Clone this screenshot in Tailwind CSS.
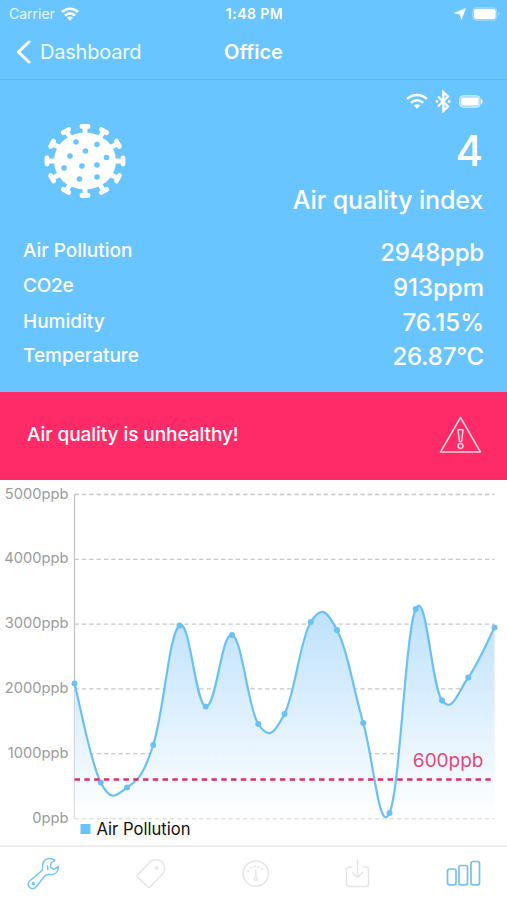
<!DOCTYPE html>
<html lang="en">
<head>
  <meta charset="UTF-8" />
  <meta name="viewport" content="width=device-width, initial-scale=1" />
  <title>Office - Air quality</title>
  <script src="https://cdn.jsdelivr.net/npm/@tailwindcss/browser@4"></script>
</head>
<body class="bg-white">
  <div class="flex flex-col w-[507px] h-[900px] overflow-hidden font-['Inter','Liberation_Sans',sans-serif]">

    <!-- Status bar -->
    <header class="bg-[#69c5ff] text-white border-b border-[#5db7ef] h-20 shrink-0">
      <div class="grid grid-cols-3 items-center h-[27px] pl-[9px] pr-[7px]">
        <div class="flex items-center gap-1.5 text-[14px] text-white/85">
          <span>Carrier</span>
          <svg class="w-[18px] h-[14px]" viewBox="0 0 18 14" fill="none" stroke="white" stroke-width="2.6">
            <path d="M1 5a11.3 11.3 0 0 1 16 0M4 8.6a7.1 7.1 0 0 1 10 0" />
            <path d="M9 13.8 6 10.8a4.2 4.2 0 0 1 6 0z" fill="white" stroke="none" />
          </svg>
        </div>
        <div class="text-center text-[14px] font-semibold tracking-[0.45px]">1:48 PM</div>
        <div class="flex items-center justify-end gap-1.5">
          <svg class="w-3 h-3" viewBox="0 0 12 12" fill="white" stroke="white" stroke-width=".6"><path d="M11.500.500 7.300 11.500 6.300 6.200.500 5z" /></svg>
          <svg class="w-[28px] h-[14px]" viewBox="0 0 28 14">
            <rect x=".6" y=".6" width="24.3" height="12.8" rx="3.6" fill="#8fd3ff" stroke="#94d6ff" />
            <rect x="2" y="2" width="21.5" height="10" rx="2.2" fill="white" />
            <path d="M26.3 5c1.6.6 1.6 3.4 0 4z" fill="#a3dbff" />
          </svg>
        </div>
      </div>
      <!-- Nav -->
      <div class="grid grid-cols-3 items-center h-[50px] px-4">
        <div class="flex items-center gap-[9px] text-[20px] tracking-[-0.2px] text-white/90">
          <svg class="w-[15px] h-6" viewBox="0 0 15 24" fill="none" stroke="white" stroke-width="3" stroke-linecap="round" stroke-linejoin="round"><path d="M13 2 2.3 12 13 22" /></svg>
          <span>Dashboard</span>
        </div>
        <div class="text-center text-[20px] font-semibold">Office</div>
      </div>
    </header>

    <!-- Current values -->
    <section class="bg-[#69c5ff] text-white h-[312px] shrink-0 px-6 pt-[9px]">
      <div class="flex justify-end items-center gap-2 h-6">
        <svg class="w-[22px] h-4 -mr-px" viewBox="0 0 22 16" fill="none" stroke="white" stroke-width="2.4">
          <path d="M1.2 6a13.9 13.9 0 0 1 19.6 0M5 9.8a8.5 8.5 0 0 1 12 0" />
          <path d="M11 15.8 7.8 12.6a4.5 4.5 0 0 1 6.4 0z" fill="white" stroke="none" />
        </svg>
        <svg class="w-4 h-[23px]" viewBox="0 0 16 23" fill="none" stroke="white" stroke-width="2.300">
          <path d="m3 6.500 10 10L8.300 21V2L13 6.500 3 16.500" />
          <circle cx="2" cy="11.500" r="1.400" fill="white" stroke="none" />
          <circle cx="14" cy="11.500" r="1.400" fill="white" stroke="none" />
        </svg>
        <svg class="w-6 h-[13px]" viewBox="0 0 24 13">
          <rect x=".7" y=".7" width="20.500" height="11.600" rx="3.500" fill="#a9dcff" stroke="#d2edff" />
          <rect x="2.500" y="2.800" width="17" height="7.400" rx="1" fill="white" />
          <path d="M22 4c2.300 1 2.300 4 0 5z" fill="white" />
        </svg>
      </div>
      <div class="flex justify-between">
        <svg class="w-[82px] h-20 ml-5 mt-[8px]" viewBox="0 0 82 80">
          <ellipse cx="41" cy="40" rx="31" ry="28.500" fill="white" />
          <g id="spikes" stroke="white" stroke-width="4.800" stroke-linecap="round" fill="none"></g>
          <g fill="#69c5ff">
            <circle cx="32" cy="21" r="2.800" /><circle cx="53" cy="23.500" r="2.800" />
            <circle cx="41.500" cy="30" r="2.800" /><circle cx="26" cy="35" r="2.800" />
            <circle cx="62.500" cy="36.500" r="2.800" /><circle cx="20" cy="47" r="2.800" />
            <circle cx="38" cy="45" r="2.800" /><circle cx="53" cy="44" r="2.800" />
            <circle cx="35.500" cy="58" r="2.800" /><circle cx="53" cy="56" r="2.800" />
          </g>
        </svg>
        <div class="text-right">
          <div class="text-[42px] leading-[50px] mt-[13px] font-medium">4</div>
          <div class="text-[25px] leading-8 mt-[8px] font-medium tracking-[-0.15px]">Air quality index</div>
        </div>
      </div>
      <dl class="mt-[19px] -ml-px -mr-px">
        <div class="flex justify-between h-[35px]">
          <dt class="text-[19px] leading-8 font-medium">Air Pollution</dt>
          <dd class="text-[24px] leading-9 font-medium tracking-[-0.2px]">2948ppb</dd>
        </div>
        <div class="flex justify-between h-[35px]">
          <dt class="text-[19px] leading-8 font-medium tracking-[-0.2px]">CO2e</dt>
          <dd class="text-[24px] leading-9 font-medium">913ppm</dd>
        </div>
        <div class="flex justify-between h-[35px]">
          <dt class="text-[19px] leading-[34px] font-medium">Humidity</dt>
          <dd class="text-[24px] leading-9 font-medium">76.15%</dd>
        </div>
        <div class="flex justify-between h-[35px]">
          <dt class="text-[19px] leading-8 font-medium">Temperature</dt>
          <dd class="text-[24px] leading-[34px] font-medium tracking-[-0.2px]">26.87°C</dd>
        </div>
      </dl>
    </section>

    <!-- Alert -->
    <section class="bg-[#ff2b69] text-white h-[88px] shrink-0 flex items-center justify-between pl-[27px] pr-[25px]">
      <p class="text-[19px] font-medium tracking-[-0.06px] -mt-0.5">Air quality is unhealthy!</p>
      <svg class="w-[43px] h-[38px] -mt-0.5" viewBox="0 0 43 38" fill="none" stroke="#ffd5e1" stroke-width="1.500" stroke-linejoin="round">
        <path d="M21.500 1.500 41.500 36H1.500z" />
        <path d="M19 14q2.500-1 5 0l-1.400 11.500h-2.200z" />
        <circle cx="21.500" cy="30" r="2.400" />
      </svg>
    </section>

    <!-- Chart -->
    <section class="h-[365px] shrink-0">
      <svg class="w-[507px] h-[365px]" viewBox="0 480 507 365">
        <defs>
          <linearGradient id="fill" gradientUnits="userSpaceOnUse" x1="0" y1="606" x2="0" y2="818">
            <stop offset="0" stop-color="#b7defd" />
            <stop offset="1" stop-color="#ffffff" />
          </linearGradient>
        </defs>
        <g id="grid" stroke="#c8c8c8" stroke-width="1.300" stroke-dasharray="4.400 2.930"></g>
        <path d="M74.500 494.500V818.500" stroke="#c4c4c4" stroke-width="1.300" />
        <path id="area" fill="url(#fill)" fill-opacity="0.920" />
        <path id="line" fill="none" stroke="#69c1f8" stroke-width="2.200" />
        <g id="dots" fill="#69c1f8"></g>
        <path d="M74.500 779.500H494" stroke="#df2f69" stroke-width="2.600" stroke-dasharray="5.500 4.280" />
        <text x="483.500" y="766.500" text-anchor="end" class="text-[19px]" fill="#e0487a">600ppb</text>
        <g id="labels" class="text-[14.7px]" fill="#9b9ca0" text-anchor="end"></g>
        <rect x="80.500" y="824" width="10" height="10" fill="#69c5ff" />
        <text x="96.500" y="835" class="text-[16.6px]" fill="#111">Air Pollution</text>
      </svg>
    </section>

    <!-- Tab bar -->
    <nav class="grow border-t-2 border-[#eeeeef] flex">
      <svg class="w-[507px] h-[53px]" viewBox="0 847 507 53" fill="none" stroke="#e6e6e7" stroke-width="1.500" stroke-linecap="round" stroke-linejoin="round">
        <g stroke="#74c6fa">
          <path d="M54.800 860.300C51 857.500 46 858 43.800 861.500c-1.300 2-1.500 4.500-1.200 7 0 1-.6 1.800-1.500 2.700L30 880.800c-2 1.900-2.200 4.600-.5 6.500 2 2 5 1.800 6.800-.5l8-10.300c1-1.300 2.200-2 3.700-2h4.500c3.500-.5 6-3.800 6-8l-4.500 2.800-3.500-2.100.3-3.700z" />
          <circle cx="33.300" cy="883.500" r="1.100" />
          <path d="m47.500 866 .3 3.500" />
        </g>
        <path d="m137.500 875 13-13.500c1-1 2-1.500 3.500-1.500h4.500c3 .5 6 4 6 7v3c0 1.500-.5 2.500-1.500 3.500L150 887c-.7.700-1.300.7-2 0l-10.500-10c-.7-.7-.7-1.300 0-2z" />
        <circle cx="156.500" cy="868" r="1.300" />
        <circle cx="255.800" cy="873.500" r="12.600" />
        <path d="M255.800 870v7" />
        <circle cx="255.800" cy="879" r="1.500" />
        <path d="M248 871.500a8.500 8.500 0 0 1 15.600 0" stroke-dasharray="1 3" />
        <path d="M352 867h-3q-2.500 0-2.500 2.500V884q0 2.500 2.500 2.500H366q2.500 0 2.500-2.500v-14.500q0-2.500-2.500-2.500h-3M357.500 860v17M352.500 872.500l5 5 5-5" />
        <g stroke="#74c1f5" stroke-width="1.700">
          <rect x="447.500" y="869" width="8.500" height="15.800" rx="2" />
          <rect x="459" y="865.500" width="8.500" height="19.300" rx="2" />
          <rect x="471" y="861.500" width="8.500" height="23.300" rx="2" />
        </g>
      </svg>
    </nav>
  </div>

  <script>
    const svgEl = (parent, name, attrs, text) => {
      const el = document.createElementNS('http://www.w3.org/2000/svg', name);
      Object.entries(attrs).forEach(([k, v]) => el.setAttribute(k, v));
      if (text) el.textContent = text;
      document.getElementById(parent).appendChild(el);
    };

    // Virus spikes
    for (let i = 0; i < 12; i++) {
      const a = i * Math.PI / 6;
      const c = Math.cos(a), s = Math.sin(a);
      const x = 41 + 38 * c, y = 40 + 34.5 * s;
      svgEl('spikes', 'path', { d: `M${41 + 28 * c} ${40 + 26 * s}L${x} ${y}M${x - 3.1 * s} ${y + 3.1 * c}L${x + 3.1 * s} ${y - 3.1 * c}` });
    }

    // Grid and axis labels
    for (let v = 0; v <= 5; v++) {
      const y = 818.5 - v * 64.8;
      svgEl('grid', 'path', { d: `M74.5 ${y}H494.5` });
      svgEl('labels', 'text', { x: 68.5, y: y + 4 }, v ? `${v}000ppb` : '0ppb');
    }

    // Cubic line through the readings
    const values = [683.5, 782.5, 787.5, 745, 625.5, 706.5, 635, 724, 714, 622, 630, 723, 813, 609, 700.5, 677.5, 627.5];
    const pts = values.map((y, i) => [74.5 + i * 26.25, y]);
    const at = i => pts[Math.max(0, Math.min(pts.length - 1, i))];
    let d = `M${pts[0]}`;
    for (let i = 1; i < pts.length; i++) {
      const [pp, p, c, n] = [at(i - 2), at(i - 1), at(i), at(i + 1)];
      d += `C${p[0] + (c[0] - pp[0]) * 0.2} ${p[1] + (c[1] - pp[1]) * 0.2} ${c[0] - (n[0] - p[0]) * 0.2} ${c[1] - (n[1] - p[1]) * 0.2} ${c}`;
    }
    document.getElementById('line').setAttribute('d', d);
    document.getElementById('area').setAttribute('d', `${d}V818.5H74.5Z`);
    pts.forEach(([x, y]) => svgEl('dots', 'circle', { cx: x, cy: y, r: 3 }));
  </script>
</body>
</html>
